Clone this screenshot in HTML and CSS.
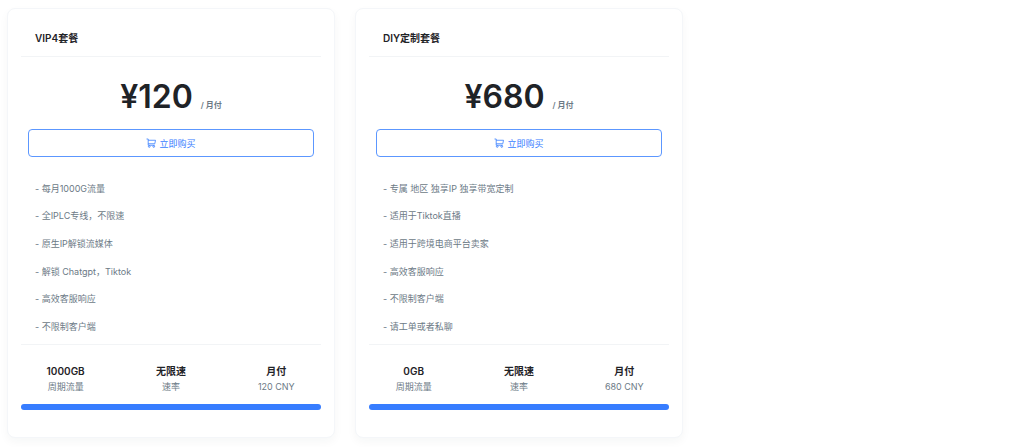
FILE: index.html
```html
<!DOCTYPE html>
<html lang="zh-CN">
<head>
    <meta charset="UTF-8">
    <meta name="viewport" content="width=device-width, initial-scale=1">
    <title>套餐</title>
    <link rel="stylesheet" href="styles.css">
</head>
<body>
    <main class="plans">
        <section class="card">
            <h2 class="card-title">VIP4套餐</h2>
            <div class="card-body">
                <p class="price">¥120 <span class="period">/ 月付</span></p>
                <button type="button" class="buy">
                    <svg class="icon-cart" viewBox="0 0 20 20" aria-hidden="true">
                        <path d="M1 2h3.4v12.5H17.5M4.4 4.5H19L17.6 11.5H4.4"/>
                        <circle cx="6.5" cy="17" r="1.7"/>
                        <circle cx="15.5" cy="17" r="1.7"/>
                    </svg>
                    立即购买
                </button>
                <ul class="features">
                    <li>- 每月1000G流量</li>
                    <li>- 全IPLC专线，不限速</li>
                    <li>- 原生IP解锁流媒体</li>
                    <li>- 解锁 Chatgpt，Tiktok</li>
                    <li>- 高效客服响应</li>
                    <li>- 不限制客户端</li>
                </ul>
            </div>
            <dl class="stats">
                <div><dt>1000GB</dt><dd>周期流量</dd></div>
                <div><dt>无限速</dt><dd>速率</dd></div>
                <div><dt>月付</dt><dd>120 CNY</dd></div>
            </dl>
            <div class="bar"></div>
        </section>

        <section class="card">
            <h2 class="card-title">DIY定制套餐</h2>
            <div class="card-body">
                <p class="price">¥680 <span class="period">/ 月付</span></p>
                <button type="button" class="buy">
                    <svg class="icon-cart" viewBox="0 0 20 20" aria-hidden="true">
                        <path d="M1 2h3.4v12.5H17.5M4.4 4.5H19L17.6 11.5H4.4"/>
                        <circle cx="6.5" cy="17" r="1.7"/>
                        <circle cx="15.5" cy="17" r="1.7"/>
                    </svg>
                    立即购买
                </button>
                <ul class="features">
                    <li>- 专属 地区 独享IP 独享带宽定制</li>
                    <li>- 适用于Tiktok直播</li>
                    <li>- 适用于跨境电商平台卖家</li>
                    <li>- 高效客服响应</li>
                    <li>- 不限制客户端</li>
                    <li>- 请工单或者私聊</li>
                </ul>
            </div>
            <dl class="stats">
                <div><dt>0GB</dt><dd>周期流量</dd></div>
                <div><dt>无限速</dt><dd>速率</dd></div>
                <div><dt>月付</dt><dd>680 CNY</dd></div>
            </dl>
            <div class="bar"></div>
        </section>
    </main>
</body>
</html>
```
FILE: styles.css
```css
* { box-sizing: border-box; }

body {
    margin: 0;
    background: #fff;
    color: #1f2327;
    font-family: Inter, "Noto Sans CJK SC", sans-serif;
    font-size: 9px;
    overflow-x: hidden;
}

h2, p, ul, dl, dd { margin: 0; padding: 0; }

/* three columns, the last one bleeds off the right edge */
.plans {
    display: grid;
    grid-template-columns: repeat(3, 1fr);
    gap: 20px;
    margin: 0 -7px 0 7px;
    padding: 8px 0 10px;
}

.card {
    padding: 13px 13px 27px;
    border: 1px solid #f4f6f9;
    border-radius: 8px;
    background: #fff;
    box-shadow: 0 4px 10px rgba(31, 45, 61, 0.04);
}

.card-title {
    padding: 6px 14px 8px;
    border-bottom: 1px solid #f2f4f6;
    font-size: 10px;
    font-weight: 600;
    line-height: 20px;
}

.card-body {
    padding: 20px 7px 3px;
    border-bottom: 1px solid #f2f4f6;
}

.price {
    height: 40px;
    font-size: 32px;
    font-weight: 600;
    line-height: 40px;
    text-align: center;
}

.period {
    color: #6c7a86;
    font-size: 8px;
    font-weight: 600;
}

.buy {
    display: flex;
    align-items: center;
    justify-content: center;
    gap: 3px;
    width: 100%;
    height: 28px;
    margin: 12px 0 18px;
    padding: 0;
    border: 1px solid #5c97ff;
    border-radius: 4px;
    background: #fff;
    color: #377dff;
    font: inherit;
    cursor: pointer;
}

.icon-cart {
    width: 10px;
    height: 10px;
    fill: none;
    stroke: currentColor;
    stroke-width: 1.6;
}

.features {
    display: grid;
    grid-auto-rows: 1fr;
    align-items: center;
    min-height: 166px;
    padding: 0 7px;
    color: #6c7a86;
    line-height: 14px;
    list-style: none;
}

.stats {
    display: grid;
    grid-template-columns: 1fr 1fr 1fr;
    padding: 18px 0 9px;
    margin-right: -8px;
    margin-left: -8px;
    text-align: center;
}

.stats dt {
    font-size: 10px;
    font-weight: 600;
    line-height: 16px;
}

.stats dd {
    color: #6c7a86;
    line-height: 16px;
}

.bar {
    height: 6px;
    border-radius: 3px;
    background: #377dff;
}
```
